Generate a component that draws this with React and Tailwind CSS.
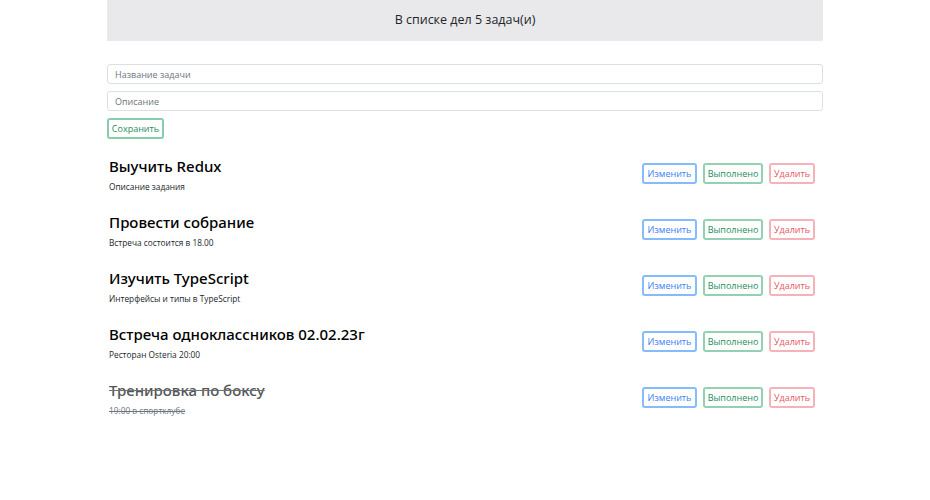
import React from 'react';

const tasks = [
  { id: 1, title: 'Выучить Redux', text: 'Описание задания', done: false },
  { id: 2, title: 'Провести собрание', text: 'Встреча состоится в 18.00', done: false },
  { id: 3, title: 'Изучить TypeScript', text: 'Интерфейсы и типы в TypeScript', done: false },
  { id: 4, title: 'Встреча одноклассников 02.02.23г', text: 'Ресторан Osteria 20:00', done: false },
  { id: 5, title: 'Тренировка по боксу', text: '19:00 в спортклубе', done: true },
];

const TaskItem = ({ task }) => (
  <div className="flex items-start justify-between h-[56px] pl-[2px] pr-[8px]">
    <div className={task.done ? 'line-through text-[#6c757d]' : 'text-[#212529]'}>
      <h3
        className={`text-[15px] leading-[22px] font-medium ${task.done ? 'text-[#555]' : 'text-black'}`}
        style={{ fontFamily: '"Noto Sans", "Open Sans", sans-serif' }}
      >
        {task.title}
      </h3>
      <p className="text-[8.3px] leading-[12px] mt-[4px]">{task.text}</p>
    </div>
    <div className="flex gap-[6px] mt-[8px]">
      <button className="h-[21px] w-[55px] border-2 border-[#84bcff] rounded-[3px] text-[9px] text-[#3b7ff2]">Изменить</button>
      <button className="h-[21px] w-[60px] border-2 border-[#92d1b4] rounded-[3px] text-[9px] text-[#238d5e]">Выполнено</button>
      <button className="h-[21px] w-[46px] border-2 border-[#f6b2b8] rounded-[3px] text-[9px] text-[#ea5563]">Удалить</button>
    </div>
  </div>
);

export default function App() {
  return (
    <div className="w-[930px] h-[500px] bg-white" style={{ fontFamily: '"Open Sans", "Noto Sans", sans-serif' }}>
      <div className="w-[716px] ml-[107px]">
        <div className="h-[41px] bg-[#e9e9eb] flex items-center justify-center text-[12.5px] text-[#212529]">
          В списке дел 5 задач(и)
        </div>
        <form className="mt-[23px] flex flex-col gap-[7px]">
          <input
            className="h-[20px] w-full border border-[#dcdfe3] rounded-[3px] px-[7px] text-[9px] placeholder:text-[#6c757d] outline-none"
            placeholder="Название задачи"
          />
          <input
            className="h-[20px] w-full border border-[#dcdfe3] rounded-[3px] px-[7px] text-[9px] placeholder:text-[#6c757d] outline-none"
            placeholder="Описание"
          />
          <div className="flex">
            <button type="button" className="h-[21px] w-[57px] border-2 border-[#86cdad] rounded-[3px] text-[9px] text-[#238d5e]">
              Сохранить
            </button>
          </div>
        </form>
        <div className="mt-[16px]">
          {tasks.map((t) => (
            <TaskItem key={t.id} task={t} />
          ))}
        </div>
      </div>
    </div>
  );
}
